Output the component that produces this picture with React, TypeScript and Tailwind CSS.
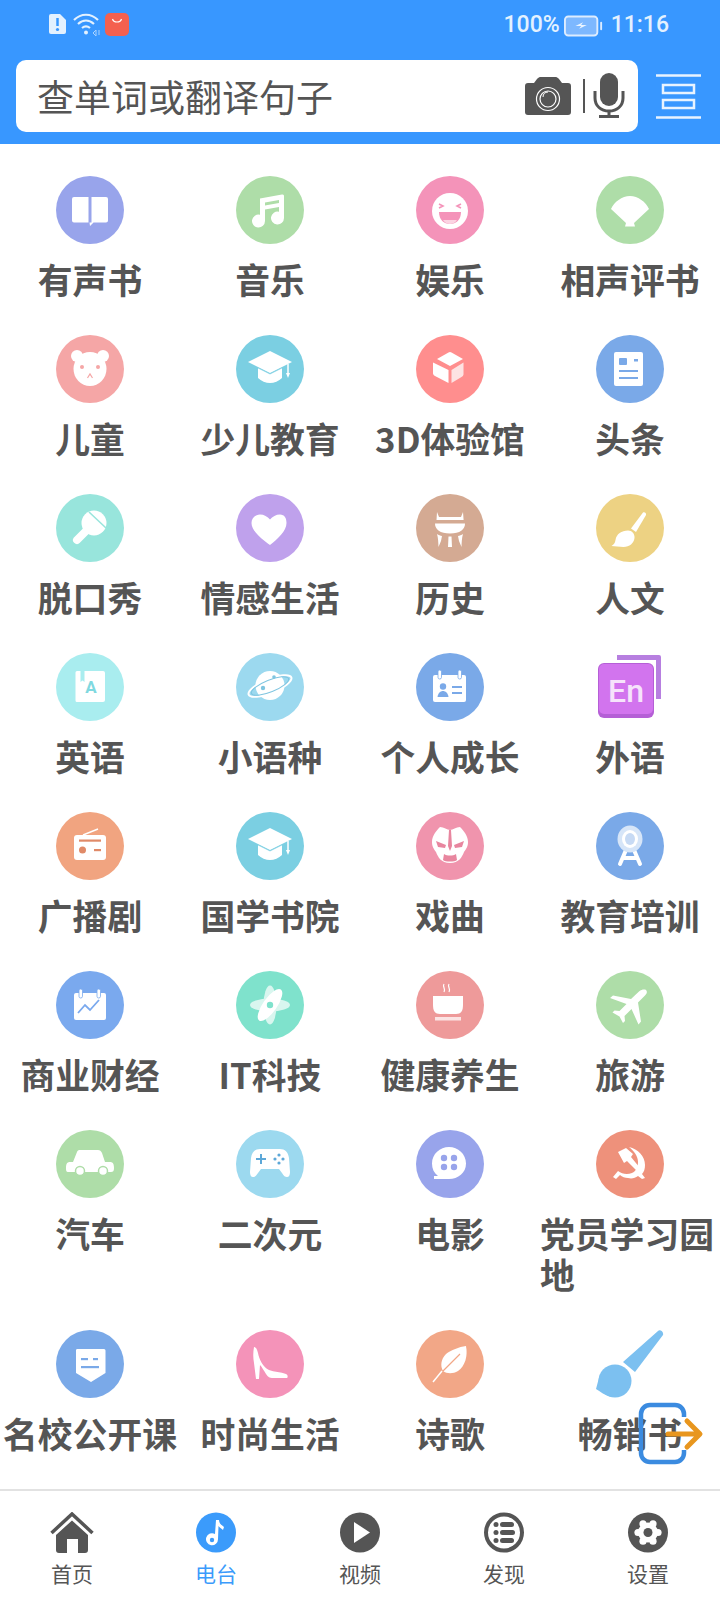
import type { ReactNode } from "react";

type Item = { label: string; bg: string; glyph: ReactNode };

const W = "#fff";

function Book() {
  return <path fill={W} d="M18 21h14.500v25.500l-1.500 0-.5 0H18a2 2 0 0 1-2-2V23a2 2 0 0 1 2-2zM35.500 21H50a2 2 0 0 1 2 2v21.500a2 2 0 0 1-2 2H37.500L34 50l-.5-3.500h2z" />;
}
function Note() {
  return (
    <g fill={W}>
      <path fillRule="evenodd" d="M24 22.500L46 18.500a1.500 1.500 0 0 1 2 1.500V42a6.500 6.500 0 1 1-5-6.300V31l-14 2.500V45a6.500 6.500 0 1 1-5-6.300zM29 26.500v3l14-2.500v-3z" />
    </g>
  );
}
function Laugh({ c }: { c: string }) {
  return (
    <g>
      <circle cx="34" cy="35" r="18" fill={W} />
      <path d="M23 28l4 2-4 2M45 28l-4 2 4 2" fill="none" stroke={c} strokeWidth="1.600" />
      <path d="M23 36h22c0 8-5 12-11 12s-11-4-11-12z" fill={c} />
      <path d="M27 44h14c-2 3-5 4-7 4s-5-1-7-4z" fill="#fbd3e2" />
    </g>
  );
}
function Fan() {
  return <path fill={W} d="M15 33c3-7 11-13 19-13s16 6 19 13L38 47l1 3.500h-10l1-3.500zM33 47h2l1 3h-4z" />;
}
function Bear({ c }: { c: string }) {
  return (
    <g>
      <circle cx="21" cy="21" r="6" fill={W} />
      <circle cx="47" cy="21" r="6" fill={W} />
      <ellipse cx="34" cy="34" rx="16.500" ry="17" fill={W} />
      <circle cx="26" cy="32" r="2" fill={c} />
      <circle cx="42" cy="32" r="2" fill={c} />
      <path d="M31.500 43l2.500-4 2.500 4" fill="none" stroke={c} strokeWidth="1.200" />
    </g>
  );
}
function Cap({ c }: { c: string }) {
  return (
    <g>
      <path fill={W} d="M12 27l22-11 22 11-22 11zM22 33l12 6 12-6v10c-3 3-8 5-12 5s-9-2-12-5z" />
      <path d="M52 29v10" stroke={W} strokeWidth="1.500" />
      <path d="M50 38h4l-2 5z" fill={W} />
      <path d="M22 33l12 6 12-6" fill="none" stroke={c} strokeWidth=".6" />
    </g>
  );
}
function Cube() {
  return (
    <g>
      <path fill={W} d="M32.500 17.500a3 3 0 0 1 3 0L47 24 34 31 21 24z" />
      <path fill={W} d="M17 27.500l15.500 7.500v13l-13.500-7a3 3 0 0 1-2-2.500z" />
      <path fill="#fde3e3" d="M47.500 27.500L35.500 35v13l10-6a3 3 0 0 0 2-2.500z" />
    </g>
  );
}
function News({ c }: { c: string }) {
  return (
    <g>
      <rect x="18" y="17" width="29" height="34" rx="2" fill={W} />
      <rect x="23" y="23" width="8" height="7" rx="1" fill={c} />
      <rect x="38" y="24" width="4" height="2.500" fill={c} />
      <rect x="23" y="35" width="19" height="2" fill={c} />
      <rect x="23" y="42" width="19" height="2" fill={c} />
    </g>
  );
}
function Mic({ c }: { c: string }) {
  return (
    <g>
      <path d="M34 33L21 46" stroke={W} strokeWidth="8" strokeLinecap="round" />
      <circle cx="38" cy="29" r="12.500" fill={W} />
      <path d="M33 18l17 16" stroke={c} strokeWidth="1.600" />
    </g>
  );
}
function Heart() {
  return <path fill={W} d="M34 51C26 45 15.500 37 15.500 29c0-5 4-8.500 8.500-8.500 4 0 7.500 2 10 5 2.500-3 6-5 10-5 4.500 0 6.500 3.500 6.500 8.500 0 8-9 16-16.500 22z" />;
}
function Cauldron() {
  return (
    <g fill={W}>
      <path d="M21 18l2 5h22l2-5 .6 8H20.500z" />
      <path d="M19 29.500h30c0 6-5 10-15 10s-15-4-15-10z" />
      <path d="M21 40c1.500 1 3.500 1.700 5 2l-1 5-2.500 6c-.2-5-.3-9-1.500-13zM47 40c-1.500 1-3.500 1.700-5 2l1 5 2.500 6c.2-5 .3-9 1.500-13zM32.500 42.500h3l.5 10.500h-4z" />
    </g>
  );
}
function Brush() {
  return (
    <g fill={W}>
      <path d="M47 18.500c1.500-1 3.500.5 3 2.500l-10 17-5-3.500z" />
      <path d="M32 36.500c4 0 7 3.500 6.500 7.500-.5 5-5 9-11 9-4 0-9-.8-12-1 2.500-1.500 3.500-3 4-6 1-6 6-9.500 12.500-9.500z" />
    </g>
  );
}
function Notebook({ c }: { c: string }) {
  return (
    <g>
      <path fill={W} d="M21 18h3.500v11l2-1.500 2 1.500V18H47a2 2 0 0 1 2 2v27a2 2 0 0 1-2 2H21a1.500 1.500 0 0 1-1.500-1.500v-28A1.500 1.500 0 0 1 21 18z" />
      <text x="35" y="40" fontSize="17" fontWeight="700" textAnchor="middle" fill={c} fontFamily="Roboto, sans-serif">A</text>
    </g>
  );
}
function Planet({ c }: { c: string }) {
  return (
    <g>
      <circle cx="34" cy="32.500" r="14.500" fill={W} />
      <ellipse cx="34" cy="33" rx="23" ry="7" transform="rotate(-22 34 33)" fill="none" stroke={W} strokeWidth="2" />
      <ellipse cx="34" cy="33" rx="20" ry="6" transform="rotate(-22 34 33)" fill="none" stroke={c} strokeWidth="1" />
      <circle cx="38" cy="24" r="1.800" fill={c} />
      <circle cx="27" cy="35" r="2.200" fill={c} />
    </g>
  );
}
function IdCard({ c }: { c: string }) {
  return (
    <g>
      <rect x="17" y="22" width="33" height="27" rx="2" fill={W} />
      <rect x="22" y="17" width="3.500" height="9" rx="1.700" fill={W} stroke={c} strokeWidth=".8" />
      <rect x="42" y="17" width="3.500" height="9" rx="1.700" fill={W} stroke={c} strokeWidth=".8" />
      <circle cx="27" cy="33.500" r="3.200" fill={c} />
      <path d="M21.500 44c.5-4 3-6 5.500-6s5 2 5.500 6z" fill={c} />
      <rect x="36" y="33" width="10" height="2" fill={c} />
      <rect x="36" y="39" width="10" height="2" fill={c} />
    </g>
  );
}
function EnTile() {
  return (
    <g>
      <path d="M21 2h42a2 2 0 0 1 2 2v42h-5V7H21z" fill="#b77fe0" />
      <rect x="2" y="10" width="56" height="55" rx="6" fill="#b55fd6" />
      <rect x="3" y="11" width="54" height="50" rx="5" fill="#d274ee" />
      <text x="30" y="49" fontSize="32" fontWeight="500" textAnchor="middle" fill="#f6e3fb" fontFamily="Roboto, sans-serif">En</text>
    </g>
  );
}
function Radio({ c }: { c: string }) {
  return (
    <g>
      <rect x="18" y="23" width="32" height="25" rx="3" fill={W} />
      <path d="M27 23l15-6" stroke={W} strokeWidth="1.500" />
      <rect x="23" y="27.500" width="22" height="2.200" fill={c} />
      <circle cx="26.500" cy="38" r="3.500" fill={c} />
      <rect x="38" y="37" width="7" height="2.200" fill={c} />
    </g>
  );
}
function Mask({ c }: { c: string }) {
  return (
    <g>
      <path fill={W} d="M24 15c4 0 7 3 10 3s6-3 10-3c4 4 8 9 8 15 0 5-2 7-4 10-2 5-5 11-14 11s-12-6-14-11c-2-3-4-5-4-10 0-6 4-11 8-15z" />
      <path fill={c} d="M33 18h2l1 16-2 5-2-5zM20 29l10 4-1 3-7-1zM48 29l-10 4 1 3 7-1z" />
      <path fill={c} d="M28 42c3 2 9 2 12 0l1 6c-2 2-12 2-14 0z" />
    </g>
  );
}
function Medal() {
  return (
    <g>
      <path d="M30 38l-6 14M38 38l6 14M27 46h14" stroke={W} strokeWidth="4" strokeLinecap="round" fill="none" />
      <ellipse cx="34" cy="27" rx="12.500" ry="13.500" fill="#d6e5f8" />
      <ellipse cx="34" cy="27" rx="8" ry="9" fill={W} />
      <ellipse cx="34" cy="27" rx="5" ry="6" fill="#c7daf4" />
    </g>
  );
}
function ChartCal({ c }: { c: string }) {
  return (
    <g>
      <rect x="18" y="22" width="32" height="27" rx="2" fill={W} />
      <rect x="23" y="18" width="3.500" height="9" rx="1.700" fill={W} stroke={c} strokeWidth=".8" />
      <rect x="41" y="18" width="3.500" height="9" rx="1.700" fill={W} stroke={c} strokeWidth=".8" />
      <path d="M22 42l7-8 5 5 9-10" fill="none" stroke={c} strokeWidth="1.800" />
    </g>
  );
}
function Atom({ c }: { c: string }) {
  return (
    <g>
      <ellipse cx="34" cy="34" rx="20" ry="6.500" fill="#d9f6ef" />
      <ellipse cx="34" cy="34" rx="6.500" ry="19.500" fill="#d9f6ef" />
      <ellipse cx="34" cy="34" rx="7" ry="19" transform="rotate(35 34 34)" fill={W} />
      <circle cx="34" cy="34" r="3.200" fill={c} />
    </g>
  );
}
function Tea() {
  return (
    <g>
      <path d="M28 13c-2 3 2 4 0 8M33 13c-2 3 2 4 0 8" fill="none" stroke={W} strokeWidth="1.200" />
      <path fill={W} d="M17 25h30v9c0 6-2 9-7 9H24c-5 0-7-3-7-9z" />
      <rect x="19" y="46" width="26" height="3.500" fill="#fbe4e4" />
    </g>
  );
}
function Plane() {
  return <path fill={W} d="M50 19c1.500 1.500 1 3.500-1 5.500l-7 7 3 19-2.500 3-7-15.500-7 7 .5 5-2 2-3.500-6.500-7-4 2-2 5 .5 7-7L14 27l3-2.500 18 3.500 8-7.500c2.500-2 5.500-2.500 7-1.500z" />;
}
function Car({ c }: { c: string }) {
  return (
    <g>
      <path fill={W} d="M24 20h18c2 0 3 1 4 3l3 9h5c3 0 4 2 4 6 0 3-1 4-3 4H12c-2 0-2-2-2-4 0-4 1-6 4-6h3l4-10c.5-1.500 1.500-2 3-2z" />
      <circle cx="24" cy="41" r="4.500" fill={W} stroke={c} strokeWidth="1.500" />
      <circle cx="47" cy="41" r="4.500" fill={W} stroke={c} strokeWidth="1.500" />
    </g>
  );
}
function Pad({ c }: { c: string }) {
  return (
    <g>
      <path fill={W} d="M24 19h20c5 0 8 3 9 9l1 14c0 3-1 5-3 5-2 0-3-1-5-4l-3-4H25l-3 4c-2 3-3 4-5 4s-3-2-3-5l1-14c1-6 4-9 9-9z" />
      <path d="M25 24v10M20 29h10" stroke={c} strokeWidth="2" />
      <circle cx="43" cy="25" r="1.600" fill={c} />
      <circle cx="43" cy="33" r="1.600" fill={c} />
      <circle cx="39" cy="29" r="1.600" fill={c} />
      <circle cx="47" cy="29" r="1.600" fill={c} />
    </g>
  );
}
function Film({ c }: { c: string }) {
  return (
    <g>
      <path fill={W} d="M33 17c9 0 17 7 17 16.500S42 49 33 49H18v-3h4c-4-3-6-7-6-12.500C16 24 24 17 33 17z" />
      <circle cx="28" cy="28" r="3.200" fill={c} />
      <circle cx="38" cy="28" r="3.200" fill={c} />
      <circle cx="28" cy="37" r="3.200" fill={c} />
      <circle cx="38" cy="37" r="3.200" fill={c} />
    </g>
  );
}
function Sickle() {
  return (
    <g fill={W}>
      <path d="M33 17c9 2 16 9 16 18 0 4-1 7-3 9l3 4-3 1-4-3c-3 2-6 3-10 2-3 0-6-1-8-3l-4 4-3-2 5-6c4 3 9 4 14 2 4-2 6-6 6-11 0-6-4-11-9-15z" />
      <path d="M22 22l8-4 7 6-2 3 9 11-3 3-10-10-3 2z" />
    </g>
  );
}
function Tag({ c }: { c: string }) {
  return (
    <g>
      <path fill={W} d="M21 19h27a1.500 1.500 0 0 1 1.500 1.500V43L35 52 20 43V20.500A1.500 1.500 0 0 1 21 19z" />
      <rect x="25" y="28" width="7" height="2.200" fill={c} />
      <rect x="37" y="28" width="5" height="2.200" fill={c} />
      <rect x="25" y="36" width="18" height="2.200" fill={c} />
    </g>
  );
}
function Heel() {
  return (
    <path fill={W} d="M18 17c2 0 3 2 4 6 1 6 5 14 11 17 5 2 12 2 17 4 2 1 2 3 1 4H36c-2 0-4-1-6-4-2-3-4-7-6-9l-1 14h-3l-2-16c-1-5-1-11 0-16z" />
  );
}
function Leaf({ c }: { c: string }) {
  return (
    <g>
      <path fill={W} d="M50 16c2 10-1 20-8 25-5 3-11 3-15 0-3-5-2-12 3-17 5-4 13-7 20-8z" />
      <path d="M44 24L26 42l-9 11" fill="none" stroke={c} strokeWidth="1.200" />
      <path d="M26 41l-9 11" fill="none" stroke={W} strokeWidth="1.500" />
    </g>
  );
}
function BigBrush() {
  return (
    <g fill="#7cc0f0">
      <path d="M62 1c2-2 6 1 5 4L39 42l-12-10z" />
      <circle cx="19" cy="51" r="16.500" />
      <path d="M4 44L0 59c4 2 9 7 16 8z" />
    </g>
  );
}

const items: Item[] = [
  { label: "有声书", bg: "bg-[#98a4eb]", glyph: <Book /> },
  { label: "音乐", bg: "bg-[#aedda8]", glyph: <Note /> },
  { label: "娱乐", bg: "bg-[#f493b9]", glyph: <Laugh c="#f493b9" /> },
  { label: "相声评书", bg: "bg-[#aedda8]", glyph: <Fan /> },
  { label: "儿童", bg: "bg-[#f5a6a6]", glyph: <Bear c="#f5a6a6" /> },
  { label: "少儿教育", bg: "bg-[#7bcfe2]", glyph: <Cap c="#7bcfe2" /> },
  { label: "3D体验馆", bg: "bg-[#ff8e8e]", glyph: <Cube /> },
  { label: "头条", bg: "bg-[#7aa9e8]", glyph: <News c="#7aa9e8" /> },
  { label: "脱口秀", bg: "bg-[#98e5dc]", glyph: <Mic c="#98e5dc" /> },
  { label: "情感生活", bg: "bg-[#bfa1ec]", glyph: <Heart /> },
  { label: "历史", bg: "bg-[#d4aa93]", glyph: <Cauldron /> },
  { label: "人文", bg: "bg-[#edd283]", glyph: <Brush /> },
  { label: "英语", bg: "bg-[#a9edef]", glyph: <Notebook c="#7fd9e0" /> },
  { label: "小语种", bg: "bg-[#9cd9ef]", glyph: <Planet c="#7fc5e0" /> },
  { label: "个人成长", bg: "bg-[#7aa9e8]", glyph: <IdCard c="#7aa9e8" /> },
  { label: "外语", bg: "", glyph: <EnTile /> },
  { label: "广播剧", bg: "bg-[#f1a480]", glyph: <Radio c="#e08a68" /> },
  { label: "国学书院", bg: "bg-[#7bcfe2]", glyph: <Cap c="#7bcfe2" /> },
  { label: "戏曲", bg: "bg-[#f094ad]", glyph: <Mask c="#e8869f" /> },
  { label: "教育培训", bg: "bg-[#7aa9e8]", glyph: <Medal /> },
  { label: "商业财经", bg: "bg-[#7aa9ee]", glyph: <ChartCal c="#7aa9ee" /> },
  { label: "IT科技", bg: "bg-[#7fe2cc]", glyph: <Atom c="#7fe2cc" /> },
  { label: "健康养生", bg: "bg-[#ee9a9a]", glyph: <Tea /> },
  { label: "旅游", bg: "bg-[#aedda8]", glyph: <Plane /> },
  { label: "汽车", bg: "bg-[#aedda8]", glyph: <Car c="#aedda8" /> },
  { label: "二次元", bg: "bg-[#9cd9ef]", glyph: <Pad c="#5da8d8" /> },
  { label: "电影", bg: "bg-[#98a4eb]", glyph: <Film c="#98a4eb" /> },
  { label: "党员学习园地", bg: "bg-[#ee917b]", glyph: <Sickle /> },
  { label: "名校公开课", bg: "bg-[#7aa9e8]", glyph: <Tag c="#7aa9e8" /> },
  { label: "时尚生活", bg: "bg-[#f493b9]", glyph: <Heel /> },
  { label: "诗歌", bg: "bg-[#f2a787]", glyph: <Leaf c="#f2a787" /> },
  { label: "畅销书", bg: "", glyph: <BigBrush /> },
];

function StatusBar() {
  return (
    <div className="flex h-[48px] items-center justify-between pl-[49px] pr-[51px] text-[23px] text-[#e3f1ff] font-['Roboto',sans-serif]">
      <div className="flex items-center">
        <svg width="17" height="20" viewBox="0 0 17 20">
          <path fill="#e3f1ff" d="M2 0h9l6 6v12a2 2 0 0 1-2 2H2a2 2 0 0 1-2-2V2a2 2 0 0 1 2-2z" />
          <path d="M8.500 4v8" stroke="#3897ff" strokeWidth="2.500" />
          <circle cx="8.500" cy="15.500" r="1.600" fill="#3897ff" />
        </svg>
        <svg className="ml-[7px]" width="28" height="24" viewBox="0 0 28 24" fill="none" stroke="#e3f1ff" strokeWidth="2.200">
          <path d="M1 8c7-7 17-7 24 0M5 12c5-4.500 11-4.500 16 0M9 16c3-2.500 5-2.500 8 0" />
          <circle cx="13" cy="20.500" r="2" fill="#e3f1ff" stroke="none" />
          <path d="M20 21l3-3v6zM26 18v5" strokeWidth="1" stroke="#a9d2ff" />
        </svg>
        <div className="ml-[4px] flex h-[23px] w-[24px] justify-center rounded-[5px] bg-[#f4604f] pt-[4px]">
          <svg width="14" height="8" viewBox="0 0 14 8" fill="none" stroke="#fff" strokeWidth="1.200">
            <path d="M2.500 2c1 4 8 4 9 0" />
          </svg>
        </div>
      </div>
      <div className="flex items-center pt-[3px] font-medium">
        <span>100%</span>
        <svg className="ml-[4px]" width="40" height="22" viewBox="0 0 42 22">
          <rect x="1" y="1" width="34" height="20" rx="3.500" fill="#7db8ff" stroke="#dcecff" strokeWidth="2" />
          <path d="M12 11l8-4-2 3h6l-8 4 2-3z" fill="#eaf4ff" />
          <rect x="38" y="6.500" width="2" height="9" rx="1" fill="#dcecff" />
        </svg>
        <span className="ml-[7px]">11:16</span>
      </div>
    </div>
  );
}

function SearchRow() {
  return (
    <div className="mt-[12px] flex items-center pl-4">
      <div className="flex h-[72px] w-[622px] items-center rounded-[10px] bg-white pl-[21px] pr-[13px] text-[37px] leading-none text-[#555555]">
        <span className="flex-1">查单词或翻译句子</span>
        <svg className="mr-[12px]" width="46" height="38" viewBox="0 0 46 38" fill="#555555">
          <path d="M15 0h16c1 0 2 1 3 2l3 4h6a3 3 0 0 1 3 3v26a3 3 0 0 1-3 3H3a3 3 0 0 1-3-3V9a3 3 0 0 1 3-3h6l3-4c1-1 2-2 3-2z" />
          <circle cx="23" cy="22" r="11.500" fill="none" stroke="#fff" strokeWidth="1.200" />
          <circle cx="23" cy="22" r="8" fill="none" stroke="#fff" strokeWidth="1.200" />
          <path d="M18 20c0-3 2-5 5-5" fill="none" stroke="#fff" strokeWidth="1" />
        </svg>
        <div className="h-[34px] w-[2px] bg-[#555555]" />
        <svg className="ml-[8px]" width="32" height="46" viewBox="0 0 32 46" fill="#555555">
          <rect x="7" y="0" width="18" height="33" rx="9" />
          <path d="M2 18v7c0 8 6 13 14 13s14-5 14-13v-7" fill="none" stroke="#555555" strokeWidth="3" />
          <rect x="14.500" y="37" width="3" height="6" />
          <rect x="6" y="42" width="20" height="3" />
        </svg>
      </div>
      <svg className="ml-[18px]" width="45" height="45" viewBox="0 0 45 45" fill="none" stroke="#e8f3ff" strokeWidth="2.500">
        <path d="M0 1.500h45M0 43.500h45" />
        <rect x="7" y="11" width="31" height="8" />
        <rect x="7" y="26" width="31" height="8" />
      </svg>
    </div>
  );
}

function NavIcon({ name }: { name: string }) {
  const dark = "#555555";
  if (name === "首页")
    return (
      <svg width="44" height="41" viewBox="0 0 44 41">
        <path d="M1.500 21L22 2l20.500 19" fill="none" stroke={dark} strokeWidth="3.500" />
        <path fill={dark} d="M22 8.500L38 23v15a3 3 0 0 1-3 3h-7V27H17v14H9a3 3 0 0 1-3-3V23z" />
      </svg>
    );
  if (name === "电台")
    return (
      <svg width="40" height="41" viewBox="0 0 40 41">
        <circle cx="20" cy="20.500" r="20" fill="#3b9bfb" />
        <path d="M20 8h3c0 4 3 5 5 7l-1 3c-2-2-4-3-4.500-4L22 27a6 6 0 1 1-3-5z" fill="#fff" />
        <circle cx="16" cy="28" r="2.200" fill="#3b9bfb" />
      </svg>
    );
  if (name === "视频")
    return (
      <svg width="40" height="41" viewBox="0 0 40 41">
        <circle cx="20" cy="20.500" r="20" fill={dark} />
        <path d="M14 10l16 10.500L14 31z" fill="#fff" />
      </svg>
    );
  if (name === "发现")
    return (
      <svg width="40" height="41" viewBox="0 0 40 41" fill={dark}>
        <circle cx="20" cy="20.500" r="18" fill="none" stroke={dark} strokeWidth="4" />
        <circle cx="12" cy="12.500" r="2.500" />
        <circle cx="12" cy="20.500" r="2.500" />
        <circle cx="12" cy="28.500" r="2.500" />
        <rect x="16" y="10" width="14" height="5" rx="2.500" />
        <rect x="16" y="18" width="15" height="5" rx="2.500" />
        <rect x="16" y="26" width="14" height="5" rx="2.500" />
      </svg>
    );
  return (
    <svg width="40" height="41" viewBox="0 0 40 41">
      <circle cx="20" cy="20.500" r="20" fill={dark} />
      <g fill="#fff">
        <circle cx="20" cy="20.500" r="10" />
        <circle cx="10" cy="20.500" r="3.600" />
        <circle cx="30" cy="20.500" r="3.600" />
        <circle cx="15" cy="11.800" r="3.600" />
        <circle cx="25" cy="11.800" r="3.600" />
        <circle cx="15" cy="29.200" r="3.600" />
        <circle cx="25" cy="29.200" r="3.600" />
      </g>
      <circle cx="20" cy="20.500" r="4.500" fill={dark} />
    </svg>
  );
}

const tabs = ["首页", "电台", "视频", "发现", "设置"];

export default function App() {
  return (
    <div className="flex h-[1600px] w-[720px] flex-col overflow-hidden bg-white font-['Noto_Sans_CJK_SC',sans-serif] text-[#555555]">
      <header className="h-[144px] shrink-0 bg-[#3897ff]">
        <StatusBar />
        <SearchRow />
      </header>

      <main className="relative flex-1">
        <div className="grid grid-cols-4 pt-8">
          {items.map((it) => (
            <div key={it.label} className="flex flex-col items-center pb-[35px]">
              <div className={`flex h-[68px] w-[68px] items-center justify-center rounded-full ${it.bg}`}>
                <svg width="68" height="68" viewBox="0 0 68 68">
                  {it.glyph}
                </svg>
              </div>
              <p className="mt-[15px] text-[34.800px] font-bold leading-[41px]">{it.label}</p>
            </div>
          ))}
        </div>

        {/* zwevende knop over de laatste rij */}
        <svg className="absolute left-[637px] top-[1258px]" width="68" height="64" viewBox="0 0 68 64" fill="none">
          <path d="M47 15v-3a9 9 0 0 0-9-9H13a9 9 0 0 0-9 9v39a9 9 0 0 0 9 9h25a9 9 0 0 0 9-9v-3" stroke="#3b8be0" strokeWidth="4.500" />
          <path d="M31 32h31M50 19l13 13-13 13" stroke="#e8961e" strokeWidth="5" strokeLinecap="round" strokeLinejoin="round" />
        </svg>
      </main>

      <nav className="grid h-[111px] shrink-0 grid-cols-5 border-t-2 border-[#e2e2e2] pt-[21px]">
        {tabs.map((t) => (
          <div key={t} className="flex flex-col items-center">
            <div className="flex h-[41px] items-center">
              <NavIcon name={t} />
            </div>
            <span className={`mt-[7px] text-[21px] leading-[26px] ${t === "电台" ? "text-[#3b9bfb]" : "text-[#555555]"}`}>{t}</span>
          </div>
        ))}
      </nav>
    </div>
  );
}
